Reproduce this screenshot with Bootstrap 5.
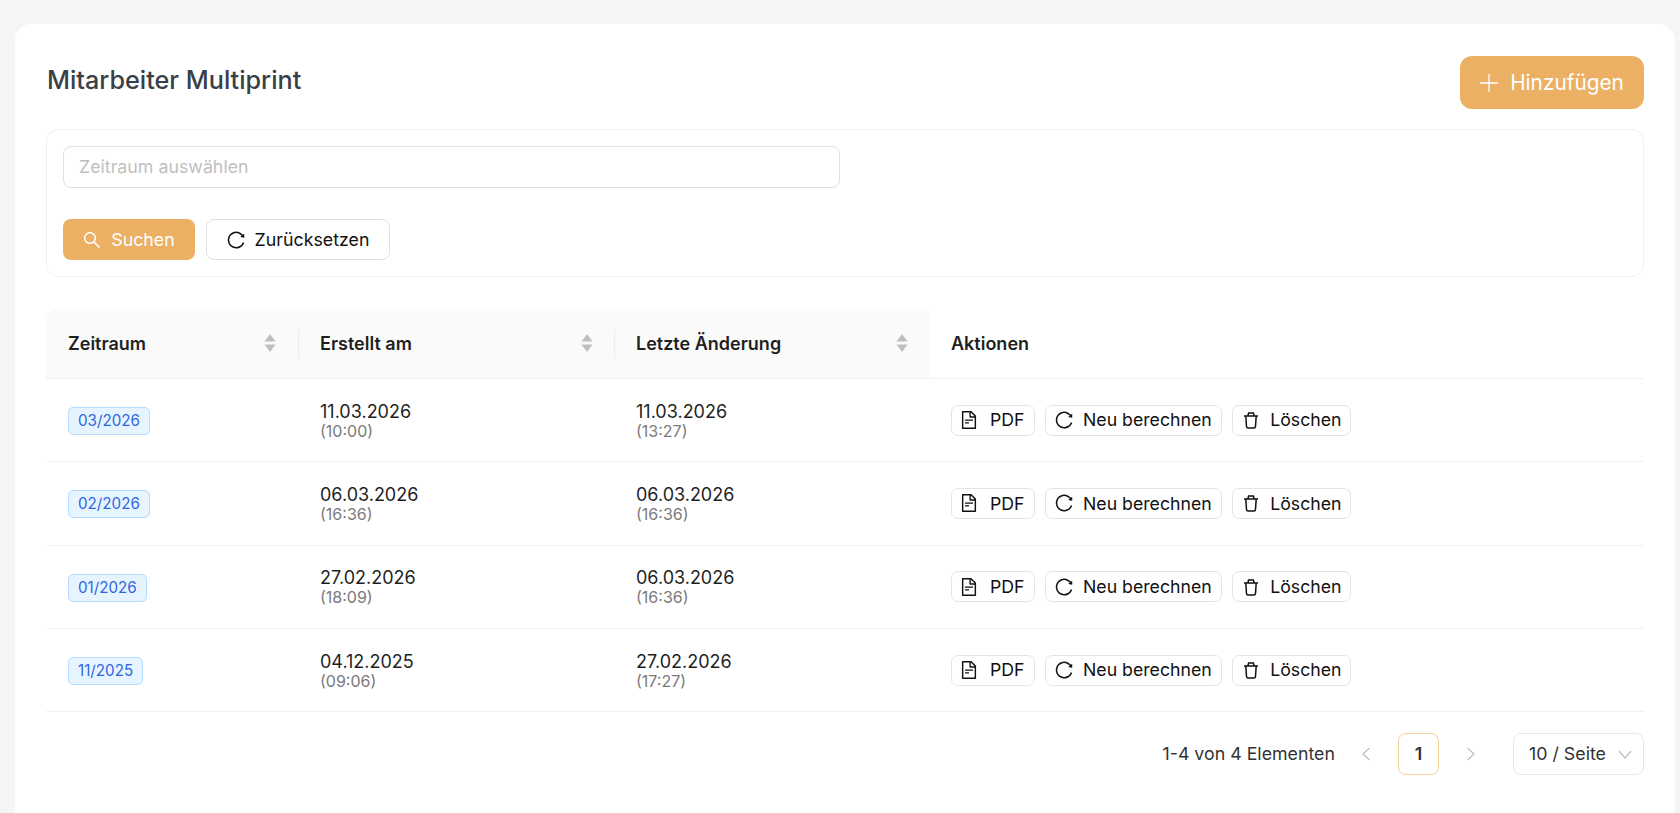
<!doctype html>
<html lang="de">
<head>
<meta charset="utf-8">
<title>Mitarbeiter Multiprint</title>
<link rel="stylesheet" href="https://cdn.jsdelivr.net/npm/bootstrap@5.3.0/dist/css/bootstrap.min.css">
<style>
html,body{height:100%}
body{background:#f5f5f5;font-family:Inter,"Liberation Sans",sans-serif;color:#1f1f1f;overflow:hidden}
.page-wrap{padding:24px 5px 0 15px;height:813px}
.sheet{background:#fff;border-radius:16px 16px 0 0;height:100%;padding:32px 31px 0 31px}
.sheet-title{font-size:25.2px;font-weight:500;color:#3a3f47;line-height:32px;margin:8px 0 0 1px}
.head-row{height:73px}
.btn-add{background:#ebb063;color:#fff;border:0;border-radius:12px;font-size:20.8px;height:53px;width:184px;gap:12px;padding:0}
.btn-add:hover{background:#ebb063;color:#fff}
.filter-box{border:1px solid #f0f0f0;border-radius:12px;padding:16px 16px;height:148px}
.range-input{width:777px;height:42px;border:1px solid #e0e0e0;border-radius:8px;font-size:17.8px;padding:0 15px 2px;color:#222}
.range-input::placeholder{color:#bfbfbf}
.btn-find,.btn-reset{height:41px;font-size:17.8px;border-radius:8px;gap:10px;padding:1px 0 0}
.btn-find{background:#ebb063;color:#fff;border:0;width:132px;margin-right:11px}
.btn-find:hover{background:#ebb063;color:#fff}
.btn-reset{background:#fff;color:#111;border:1px solid #e0e0e0;width:184px}
.filter-btns{margin-top:31px}
.data-grid{margin:32px 0 0;table-layout:fixed;width:100%;border-collapse:separate;border-spacing:0;color:#1f1f1f}
.data-grid th,.data-grid td{border-bottom:1px solid #f0f0f0;padding:0 21px;vertical-align:middle;background:#fff;box-shadow:none}
.data-grid thead th{height:70px;font-size:18px;font-weight:600;background:#fafafa;position:relative}
.data-grid thead th:first-child{border-top-left-radius:12px;padding-left:22px;padding-right:23px}
.data-grid thead th:nth-child(2){padding-right:22px}
.data-grid thead th:nth-child(3){padding-right:22px}
.data-grid thead th.act-col{background:#fff}
.data-grid thead th.sep-col::after{content:"";position:absolute;right:0;top:50%;height:28px;margin-top:-14px;width:1px;background:#ececec}
.data-grid tbody td{height:83.3px}
.data-grid tbody td.tag-cell{padding-left:22px;padding-top:2px}
.sort-mark{width:12px;height:20px;color:#bfbfbf;flex:none;margin-top:-1px}
.period-tag{display:inline-block;font-size:15.2px;line-height:26px;height:28px;padding:0 9px;background:#e6f4ff;color:#2f66e0;border:1px solid #b6dcff;border-radius:5px}
.date-main{font-size:18px;line-height:21px}
.date-sub{font-size:16px;line-height:18px;color:#7a7a7a}
.row-btn{height:31px;font-size:17.7px;line-height:1;color:#111;background:#fff;border:1px solid #e4e4e4;border-radius:7px;padding:0 9px 0 9px;gap:10px}
.btn-pdf{gap:12px;padding-left:8px}
.btn-del{gap:11px;padding-left:10px}
.row-btns{gap:10.5px}
.pager{height:42px;margin-top:21px;font-size:17.8px;color:#333}
.pg-count{margin-right:23px}
.pg-arrow{width:16px;color:#bfbfbf;display:flex;justify-content:center}
.pg-current{width:41px;height:42px;border:1px solid #f6cf9b;border-radius:8px;font-weight:600;margin:0 24px 0 24px}
.pg-size{width:131px;height:42px;border:1px solid #e6e6e6;border-radius:8px;margin-left:34px;padding:0 11px 0 15px}
.pg-size svg{color:#bfbfbf}
</style>
</head>
<body>
<svg class="d-none">
 <symbol id="i-reload" viewBox="64 64 896 896"><path fill="currentColor" d="M909.1 209.3l-56.4 44.1C775.8 155.1 656.2 92 521.9 92 290 92 102.3 279.5 102 511.5 101.7 743.7 289.8 932 521.9 932c181.3 0 335.8-115 394.6-276.1 1.5-4.2-.7-8.9-4.9-10.3l-56.7-19.5a8 8 0 0 0-10.1 4.8c-1.8 5-3.8 10-5.9 14.9-17.3 41-42.1 77.8-73.7 109.4A344.77 344.77 0 0 1 655.9 829c-42.3 17.9-87.4 27-133.8 27-46.5 0-91.5-9.1-133.8-27A341.5 341.5 0 0 1 279 755.2a342.16 342.16 0 0 1-73.7-109.4c-17.9-42.4-27-87.4-27-133.9s9.1-91.5 27-133.9c17.3-41 42.1-77.8 73.7-109.4 31.6-31.6 68.4-56.4 109.3-73.8 42.3-17.9 87.4-27 133.8-27 46.5 0 91.5 9.1 133.8 27a341.5 341.5 0 0 1 109.3 73.8c9.9 9.9 19.2 20.4 27.8 31.4l-60.2 47a8 8 0 0 0 3 14.1l175.6 43c5 1.2 9.9-2.6 9.9-7.7l.8-180.9c-.1-6.6-7.8-10.3-13-6.2z"/></symbol>
 <symbol id="i-search" viewBox="64 64 896 896"><path fill="currentColor" d="M909.6 854.5L649.9 594.8C690.2 542.7 712 479 712 412c0-80.2-31.3-155.4-87.9-212.1-56.6-56.7-132-87.9-212.1-87.9s-155.5 31.3-212.1 87.9C143.2 256.5 112 331.8 112 412c0 80.1 31.3 155.5 87.9 212.1C256.5 680.8 331.8 712 412 712c67 0 130.6-21.8 182.7-62l259.7 259.6a8.2 8.2 0 0 0 11.6 0l43.6-43.5a8.2 8.2 0 0 0 0-11.6zM570.4 570.4C528 612.7 471.8 636 412 636s-116-23.3-158.4-65.6C211.3 528 188 471.8 188 412s23.3-116.1 65.6-158.4C296 211.3 352.2 188 412 188s116.1 23.2 158.4 65.6S636 352.2 636 412s-23.3 116.1-65.6 158.4z"/></symbol>
 <symbol id="i-file" viewBox="64 64 896 896"><path fill="currentColor" d="M854.6 288.6L639.4 73.4c-6-6-14.1-9.4-22.6-9.4H192c-17.7 0-32 14.3-32 32v832c0 17.7 14.3 32 32 32h640c17.7 0 32-14.3 32-32V311.3c0-8.5-3.4-16.7-9.4-22.7zM790.2 326H602V137.8L790.2 326zm1.8 562H232V136h302v216a42 42 0 0 0 42 42h216v494zM504 618H320c-4.4 0-8 3.6-8 8v48c0 4.4 3.6 8 8 8h184c4.4 0 8-3.6 8-8v-48c0-4.4-3.6-8-8-8zM312 490v48c0 4.4 3.6 8 8 8h384c4.4 0 8-3.6 8-8v-48c0-4.4-3.6-8-8-8H320c-4.4 0-8 3.6-8 8z"/></symbol>
</svg>
<div class="page-wrap">
 <div class="sheet">
  <div class="d-flex justify-content-between align-items-start head-row">
   <h1 class="sheet-title">Mitarbeiter Multiprint</h1>
   <button type="button" class="btn btn-add d-inline-flex align-items-center justify-content-center">
    <svg width="18" height="18" viewBox="0 0 18 18" fill="none" stroke="currentColor" stroke-width="1.3"><path d="M9 0v18M0 9h18"/></svg>Hinzufügen</button>
  </div>
  <div class="filter-box">
   <input class="range-input d-block" type="text" placeholder="Zeitraum auswählen">
   <div class="d-flex filter-btns">
    <button type="button" class="btn btn-find d-inline-flex align-items-center justify-content-center">
     <svg width="18" height="18"><use href="#i-search"/></svg>Suchen</button>
    <button type="button" class="btn btn-reset d-inline-flex align-items-center justify-content-center">
     <svg width="18" height="18"><use href="#i-reload"/></svg>Zurücksetzen</button>
   </div>
  </div>
  <table class="table data-grid">
   <colgroup><col style="width:253px"><col style="width:316px"><col style="width:315px"><col></colgroup>
   <thead><tr>
    <th class="sep-col"><div class="d-flex justify-content-between align-items-center">Zeitraum<svg class="sort-mark" viewBox="0 0 12 20" fill="currentColor"><path d="M6 1l5.5 7.5H.5zM6 19L.5 11.5h11z"/></svg></div></th>
    <th class="sep-col"><div class="d-flex justify-content-between align-items-center">Erstellt am<svg class="sort-mark" viewBox="0 0 12 20" fill="currentColor"><path d="M6 1l5.5 7.5H.5zM6 19L.5 11.5h11z"/></svg></div></th>
    <th><div class="d-flex justify-content-between align-items-center">Letzte Änderung<svg class="sort-mark" viewBox="0 0 12 20" fill="currentColor"><path d="M6 1l5.5 7.5H.5zM6 19L.5 11.5h11z"/></svg></div></th>
    <th class="act-col">Aktionen</th>
   </tr></thead>
   <tbody id="rows"></tbody>
  </table>
  <div class="pager d-flex justify-content-end align-items-center">
   <span class="pg-count">1-4 von 4 Elementen</span>
   <span class="pg-arrow"><svg width="10" height="14" viewBox="0 0 10 14" fill="none" stroke="currentColor" stroke-width="1.3"><path d="M8.5 1L2 7l6.5 6"/></svg></span>
   <span class="pg-current d-flex align-items-center justify-content-center">1</span>
   <span class="pg-arrow"><svg width="10" height="14" viewBox="0 0 10 14" fill="none" stroke="currentColor" stroke-width="1.3"><path d="M1.5 1L8 7l-6.5 6"/></svg></span>
   <span class="pg-size d-flex align-items-center justify-content-between">10 / Seite<svg width="14" height="9" viewBox="0 0 14 9" fill="none" stroke="currentColor" stroke-width="1.2"><path d="M1 1l6 7 6-7"/></svg></span>
  </div>
 </div>
</div>
<script>
const data=[["03/2026","11.03.2026","(10:00)","11.03.2026","(13:27)"],["02/2026","06.03.2026","(16:36)","06.03.2026","(16:36)"],["01/2026","27.02.2026","(18:09)","06.03.2026","(16:36)"],["11/2025","04.12.2025","(09:06)","27.02.2026","(17:27)"]];
const fileI='<svg width="18" height="18"><use href="#i-file"/></svg>';
const reI='<svg width="18" height="18"><use href="#i-reload"/></svg>';
const trI='<svg width="16" height="18" viewBox="0 0 16 18" fill="none" stroke="currentColor" stroke-width="1.5"><path d="M1 5h14M4.8 5l.8-3h4.8l.8 3M2.8 5l.7 10.4q.1 1.6 1.6 1.6h5.8q1.5 0 1.6-1.6L13.2 5"/></svg>';
document.getElementById('rows').innerHTML=data.map(r=>`<tr>
<td class="tag-cell"><span class="period-tag">${r[0]}</span></td>
<td><div class="date-main">${r[1]}</div><div class="date-sub">${r[2]}</div></td>
<td><div class="date-main">${r[3]}</div><div class="date-sub">${r[4]}</div></td>
<td><div class="d-flex row-btns">
<button type="button" class="btn row-btn btn-pdf d-inline-flex align-items-center">${fileI}PDF</button>
<button type="button" class="btn row-btn d-inline-flex align-items-center">${reI}Neu berechnen</button>
<button type="button" class="btn row-btn btn-del d-inline-flex align-items-center">${trI}Löschen</button>
</div></td></tr>`).join('');
</script>
<script src="https://cdn.jsdelivr.net/npm/bootstrap@5.3.0/dist/js/bootstrap.bundle.min.js"></script>
</body>
</html>
